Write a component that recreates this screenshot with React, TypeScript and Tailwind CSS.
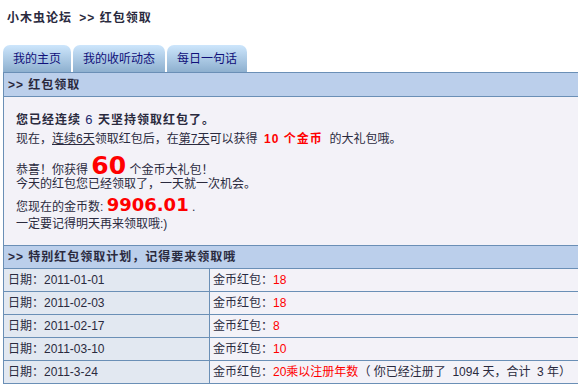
import React from 'react';

const rows = [
  { date: '2011-01-01', gold: '18' },
  { date: '2011-02-03', gold: '18' },
  { date: '2011-02-17', gold: '8' },
  { date: '2011-03-10', gold: '10' },
];

const Tab = ({ label }: { label: string }) => (
  <div className="h-[27px] px-[10px] flex items-center rounded-t-[7px] bg-gradient-to-b from-[#cde6fc] to-[#8eb0cf] text-[#10107a] text-[12px]">
    {label}
  </div>
);

const App = () => {
  return (
    <div className="min-h-screen bg-white text-[#2a2a3e] text-[12px] font-['Liberation_Sans','Noto_Sans_CJK_SC',sans-serif]">
      {/* Title */}
      <div className="h-[37px] pl-[7px] pt-[10px] font-bold text-[12px] tracking-[1px] leading-[16px]">
        小木虫论坛 <span className="ml-[3px]">&gt;&gt;</span> 红包领取
      </div>

      {/* Tabs */}
      <div className="pl-[3px] pt-[8px] flex gap-[2px] items-end">
        <Tab label="我的主页" />
        <Tab label="我的收听动态" />
        <Tab label="每日一句话" />
      </div>

      {/* Panel */}
      <div className="ml-[3px] border-l border-t border-[#6a8fb6]">
        <div className="h-[24px] bg-[#bbcfeb] border-b border-[#6a8fb6] pl-[4px] flex items-center font-bold tracking-[1px]">
          &gt;&gt; 红包领取
        </div>

        <div className="bg-[#f3f2f8] pl-[12px] pt-[14px] h-[148px] leading-[18px]">
          <div className="font-bold tracking-[1px]">
            您已经连续 <span className="font-normal text-[#1c2a6e] text-[13px]">6</span> 天坚持领取红包了。
          </div>
          <div className="mt-[1px] whitespace-nowrap">
            现在，<span className="underline">连续6天</span>领取红包后，在<span className="underline">第7天</span>可以获得&nbsp;&nbsp;
            <span className="text-[#ff0000] font-bold tracking-[1px]">10 个金币</span>&nbsp; 的大礼包哦。
          </div>
          <div className="mt-[5px] h-[25px] flex items-baseline">
            恭喜！你获得&nbsp;
            <span className="text-[#ff0000] font-bold text-[25px] font-['DejaVu_Sans',sans-serif] leading-none">60</span>
            &nbsp;个金币大礼包！
          </div>
          <div className="leading-[12px]">今天的红包您已经领取了，一天就一次机会。</div>
          <div className="mt-[6px] h-[19px] flex items-baseline">
            您现在的金币数:&nbsp;
            <span className="text-[#ff0000] font-bold text-[18px] font-['DejaVu_Sans',sans-serif] leading-none">9906.01</span>
            &nbsp;.
          </div>
          <div>一定要记得明天再来领取哦:)</div>
        </div>

        <div className="h-[24px] bg-[#bbcfeb] border-t border-b border-[#6a8fb6] pl-[4px] flex items-center font-bold tracking-[1px]">
          &gt;&gt; 特别红包领取计划，记得要来领取哦
        </div>

        {rows.map((r) => (
          <div key={r.date} className="h-[23px] flex border-b border-[#6a8fb6]">
            <div className="w-[206px] bg-[#e2e8f1] border-r border-[#6a8fb6] pl-[4px] flex items-center">
              日期：{r.date}
            </div>
            <div className="flex-1 bg-[#f3f2f8] pl-[3px] flex items-center">
              金币红包：<span className="text-[#ff0000]">{r.gold}</span>
            </div>
          </div>
        ))}
        <div className="h-[23px] flex border-b border-[#6a8fb6]">
          <div className="w-[206px] bg-[#e2e8f1] border-r border-[#6a8fb6] pl-[4px] flex items-center">
            日期：2011-3-24
          </div>
          <div className="flex-1 bg-[#f3f2f8] pl-[3px] flex items-center whitespace-nowrap">
            金币红包：<span className="text-[#ff0000]">20乘以注册年数</span>（ 你已经注册了 &nbsp;1094 天，合计 &nbsp;3 年）
          </div>
        </div>
      </div>
    </div>
  );
};

export default App;
